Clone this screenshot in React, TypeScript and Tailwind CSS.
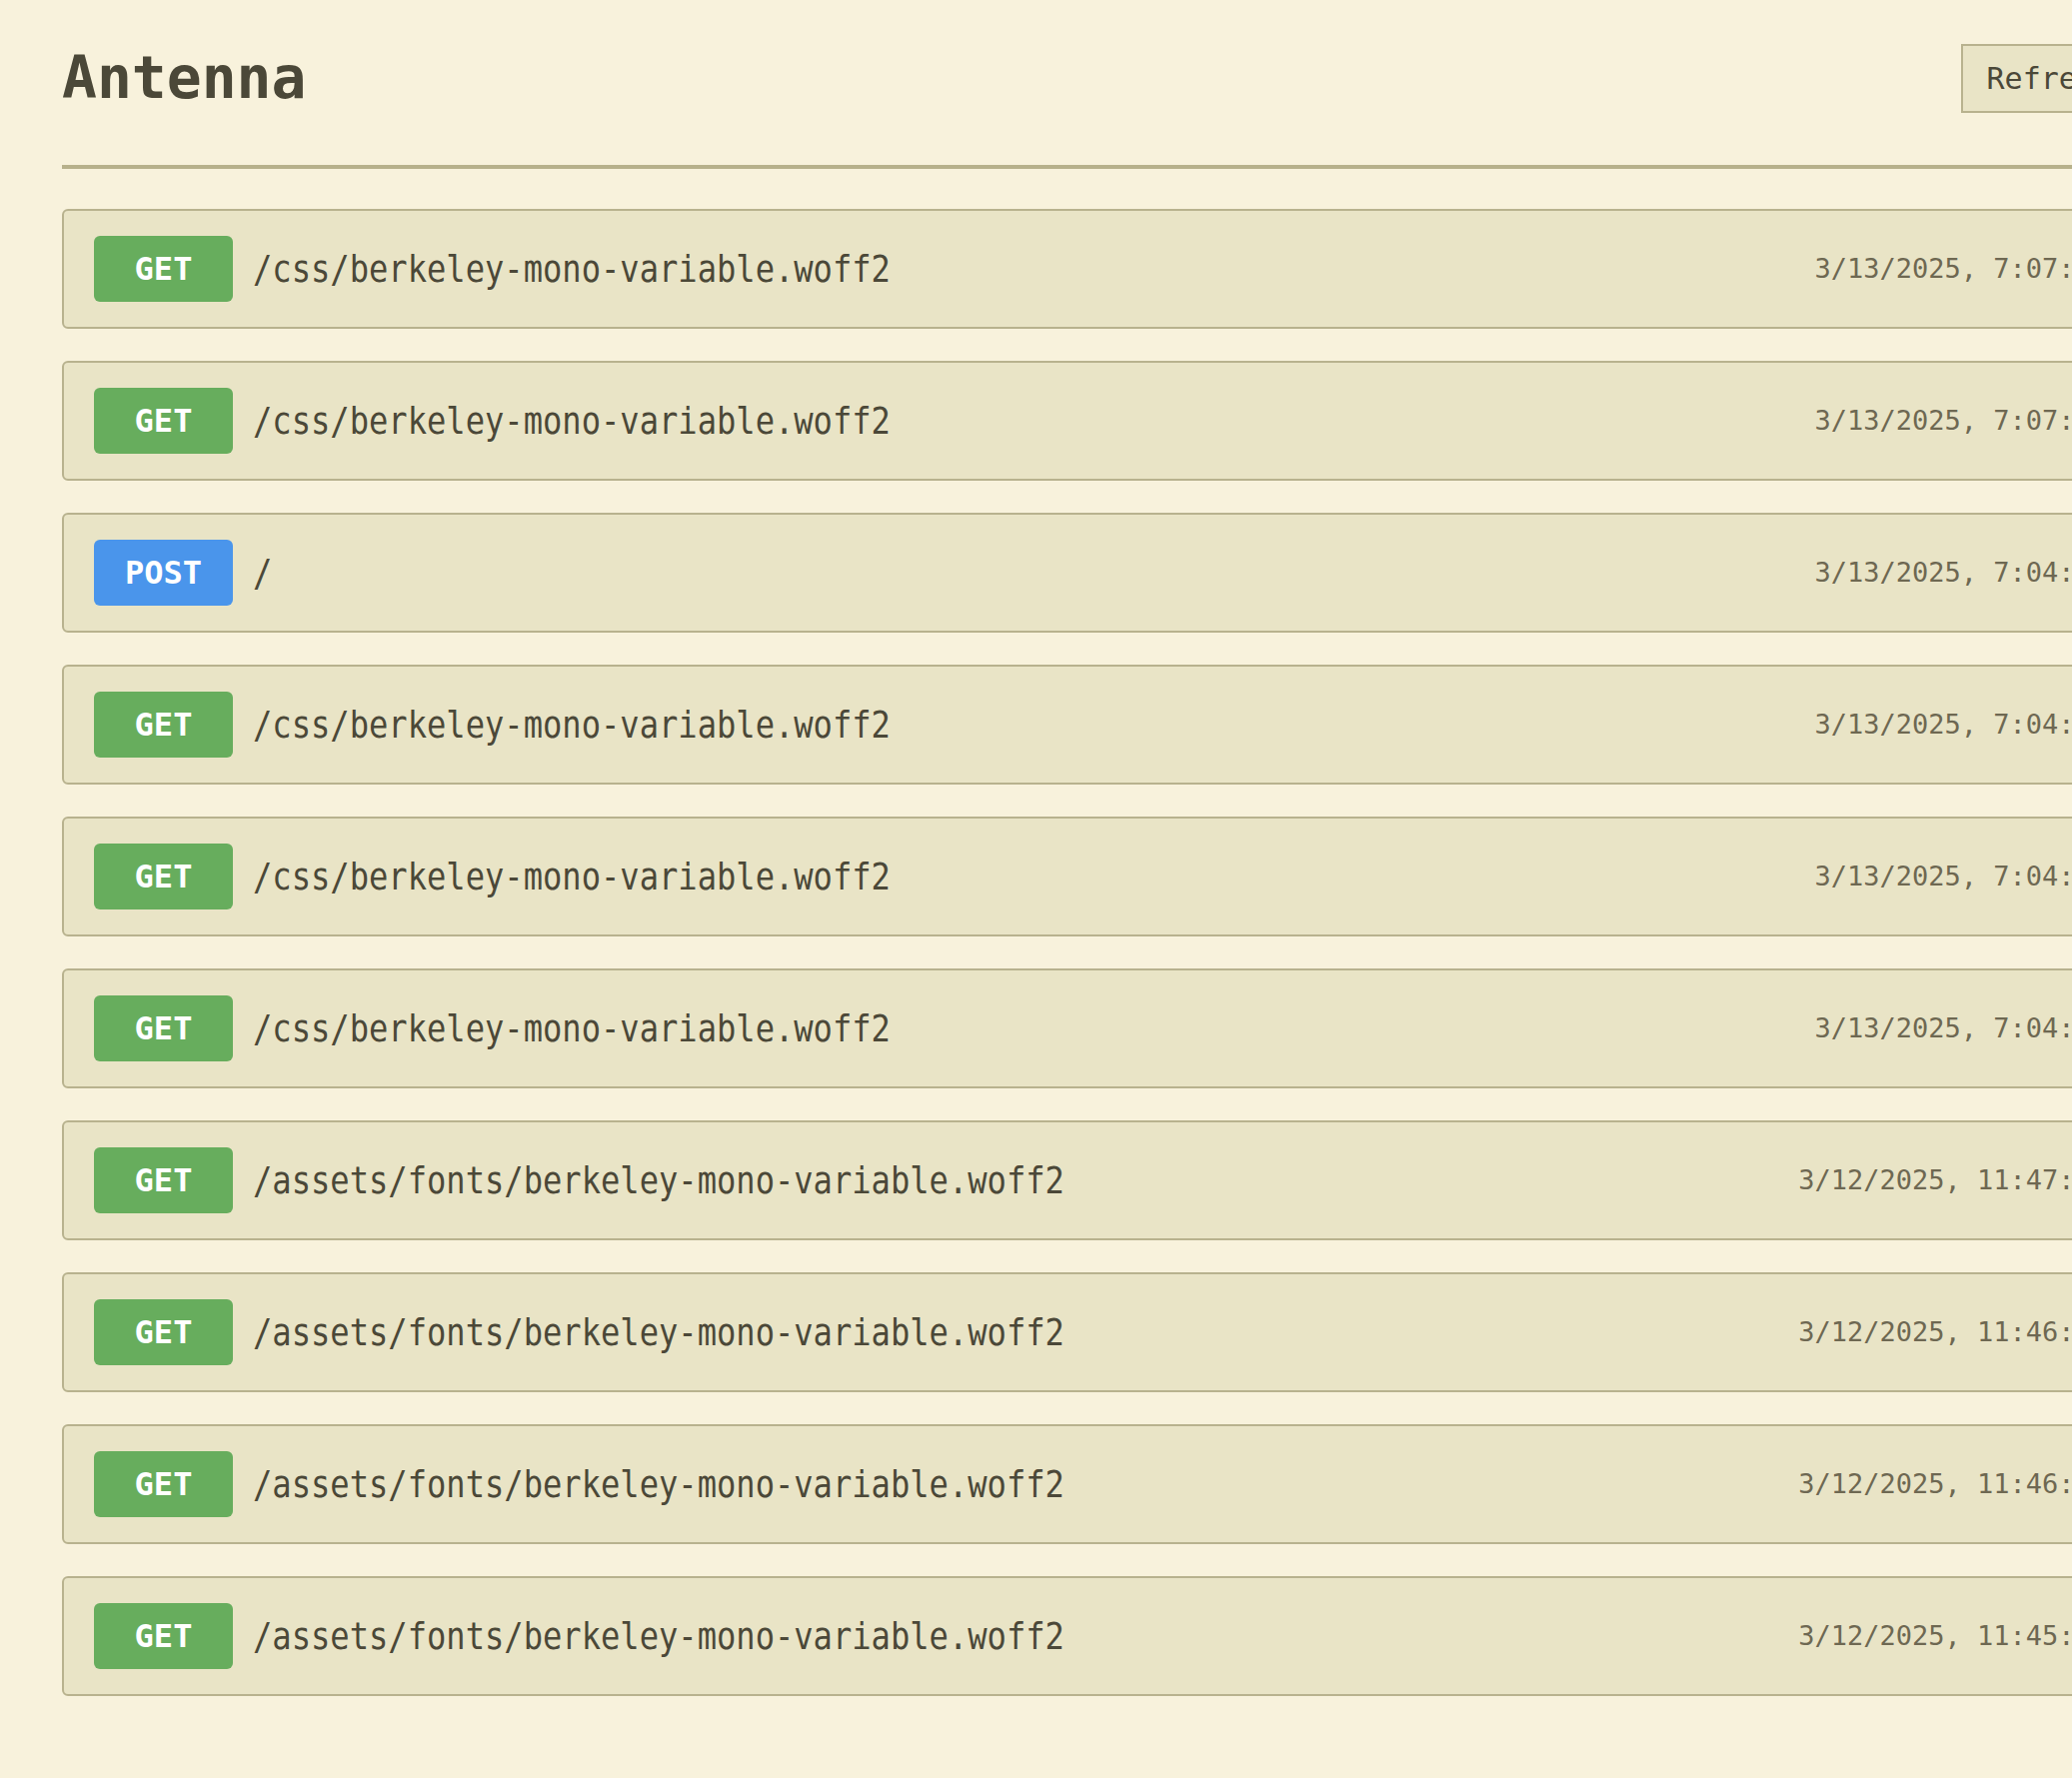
type Hit = {
  method: 'GET' | 'POST'
  path: string
  time: string
}

const hits: Hit[] = [
  { method: 'GET', path: '/css/berkeley-mono-variable.woff2', time: '3/13/2025, 7:07:41' },
  { method: 'GET', path: '/css/berkeley-mono-variable.woff2', time: '3/13/2025, 7:07:12' },
  { method: 'POST', path: '/', time: '3/13/2025, 7:04:58' },
  { method: 'GET', path: '/css/berkeley-mono-variable.woff2', time: '3/13/2025, 7:04:33' },
  { method: 'GET', path: '/css/berkeley-mono-variable.woff2', time: '3/13/2025, 7:04:20' },
  { method: 'GET', path: '/css/berkeley-mono-variable.woff2', time: '3/13/2025, 7:04:02' },
  { method: 'GET', path: '/assets/fonts/berkeley-mono-variable.woff2', time: '3/12/2025, 11:47:19' },
  { method: 'GET', path: '/assets/fonts/berkeley-mono-variable.woff2', time: '3/12/2025, 11:46:51' },
  { method: 'GET', path: '/assets/fonts/berkeley-mono-variable.woff2', time: '3/12/2025, 11:46:07' },
  { method: 'GET', path: '/assets/fonts/berkeley-mono-variable.woff2', time: '3/12/2025, 11:45:30' },
]

function MethodBadge({ method }: { method: Hit['method'] }) {
  return (
    <span
      className={
        method === 'POST'
          ? 'flex h-[66px] w-[139px] shrink-0 items-center justify-center rounded-[6px] bg-[#4a95eb] text-[32px] font-bold text-white'
          : 'flex h-[66px] w-[139px] shrink-0 items-center justify-center rounded-[6px] bg-[#67ad5d] text-[32px] font-bold text-white'
      }
    >
      {method}
    </span>
  )
}

function HitRow({ hit }: { hit: Hit }) {
  return (
    <li className="flex h-[120px] items-center rounded-[6px] border-2 border-[#b8b28e] bg-[#e9e4c6] px-[30px]">
      <MethodBadge method={hit.method} />
      <span className="ml-[20px] origin-left scale-x-[0.845] whitespace-nowrap text-[38px] leading-none text-[#4b4838]">
        {hit.path}
      </span>
      <span className="ml-auto whitespace-nowrap text-[27px] text-[#6e6852]">{hit.time}</span>
    </li>
  )
}

export default function App() {
  return (
    <div className="min-h-screen overflow-hidden bg-[#f8f2dc] pt-[43px] font-['DejaVu_Sans_Mono',monospace] text-[#4b4838]">
      <div className="ml-[62px] w-[2078px]">
        <header className="flex items-center justify-between border-b-4 border-[#b7b18b] pb-[52px]">
          <h1 className="text-[58px] font-bold leading-[70px] text-[#4b4838]">Antenna</h1>
          <button
            type="button"
            className="h-[69px] border-2 border-[#b8b28e] bg-[#e9e4c6] px-[24px] text-[30px] text-[#4b4838]"
          >
            Refresh
          </button>
        </header>

        <ul className="mt-[40px] flex flex-col gap-[32px]">
          {hits.map((hit, i) => (
            <HitRow key={i} hit={hit} />
          ))}
        </ul>
      </div>
    </div>
  )
}
